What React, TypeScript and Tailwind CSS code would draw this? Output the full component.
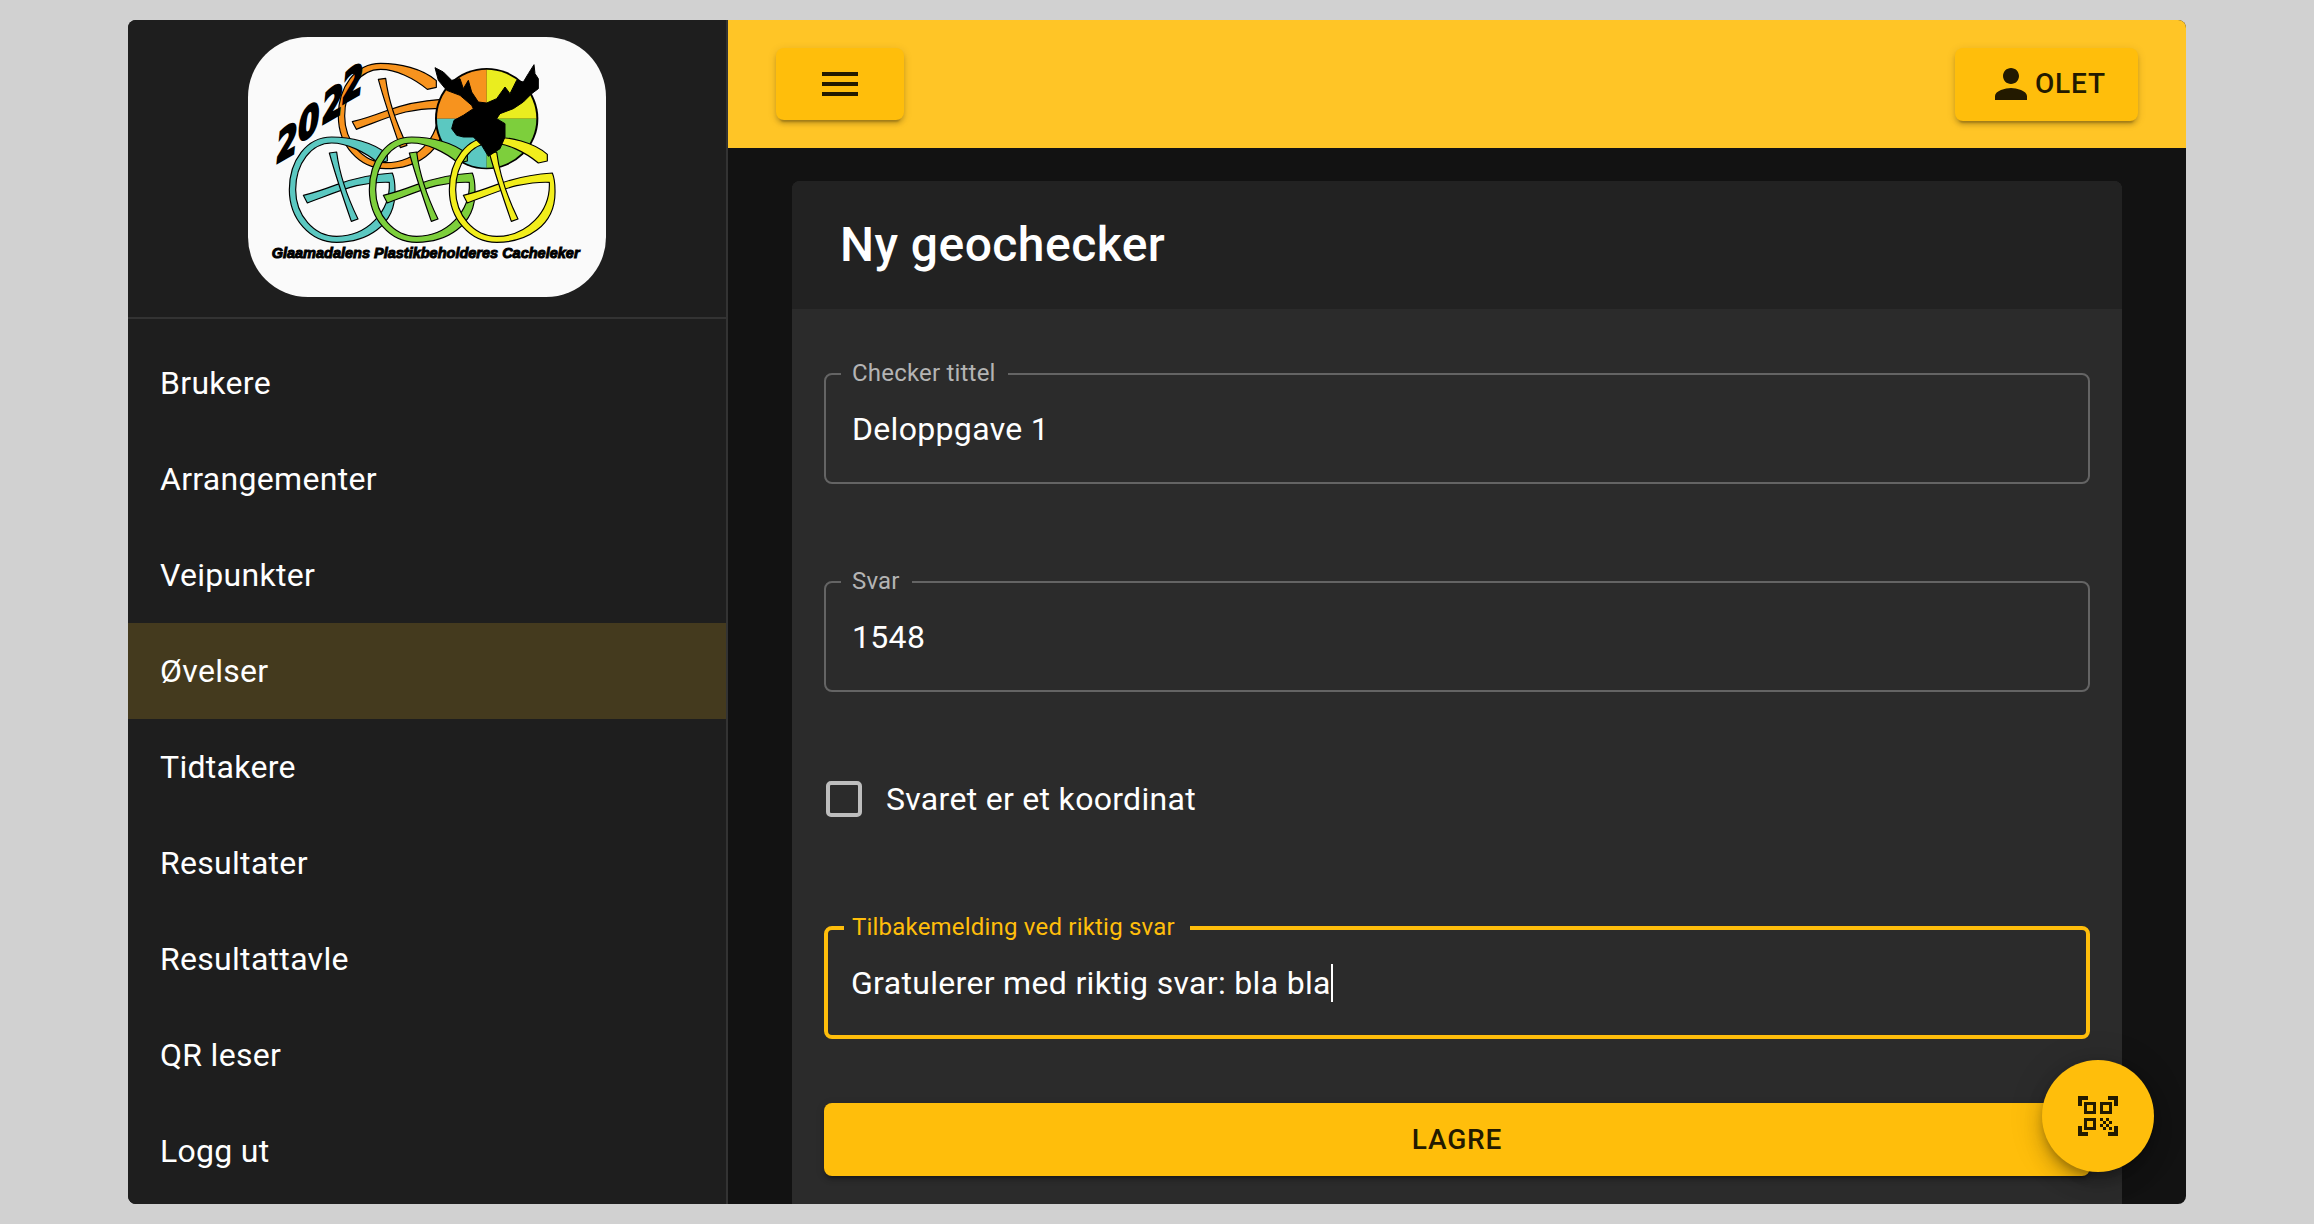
import React from "react";

const menuItems = [
  "Brukere",
  "Arrangementer",
  "Veipunkter",
  "Øvelser",
  "Tidtakere",
  "Resultater",
  "Resultattavle",
  "QR leser",
  "Logg ut",
];

// digits of the year in the logo climb step by step
const yearDigits = [
  { digit: "2", x: 135, y: 402 },
  { digit: "0", x: 200, y: 340 },
  { digit: "2", x: 272, y: 285 },
  { digit: "2", x: 332, y: 224 },
];

const RING_PATH =
  "M472 372C430 335 360 320 305 320C230 320 178 390 178 478C178 565 240 636 320 636C405 636 498 590 495 480C495 460 492 440 487 428C420 432 360 448 320 463C280 478 250 488 220 495L232 518C270 505 330 478 380 466C420 458 460 455 478 456C482 545 410 618 320 618C252 618 197 555 197 478C197 398 245 338 305 338C350 338 405 365 445 398L472 392Z";
const CROSS_PATH = "M298 368L320 365C328 430 352 500 384 566L364 573C342 510 318 440 298 368Z";

function Geocache({ color, dx, dy }: { color: string; dx: number; dy: number }) {
  return (
    <g transform={`translate(${dx} ${dy})`} fill={color} stroke="#000" strokeWidth="3.5" strokeLinejoin="round">
      <path d={RING_PATH} />
      <path d={CROSS_PATH} />
    </g>
  );
}

function Logo() {
  return (
    <svg viewBox="55 20 1072 780" className="w-[358px] h-[260px] rounded-[60px] bg-[#fafafa]">
      <Geocache color="#f7931e" dx={147} dy={-221} />
      <ellipse cx="770" cy="265" rx="155" ry="152" fill="#000" />
      <path d="M770 118A149 147 0 0 0 621 265H770Z" fill="#f7931e" />
      <path d="M770 118A149 147 0 0 1 919 265H770Z" fill="#eaed1f" />
      <path d="M770 412A149 147 0 0 1 621 265H770Z" fill="#5bc8c1" />
      <path d="M770 412A149 147 0 0 0 919 265H770Z" fill="#7dcf3c" />
      <Geocache color="#5bc8c1" dx={0} dy={0} />
      <Geocache color="#7dcf3c" dx={240} dy={0} />
      <Geocache color="#f2ee1c" dx={480} dy={0} />
      <path
        d="M615 112L640 125L665 150L690 145L700 175L715 150L725 185L745 215L770 218L800 205L825 170L840 190L860 150L880 155L895 130L912 103L915 130L925 145L925 175L905 190L880 215L850 235L810 250L800 265L825 280L825 320L810 355L775 378L755 345L730 320L700 320L680 315L665 295L672 270L700 255L730 235L725 225L690 195L650 180L625 150Z"
        fill="#000"
        stroke="#000"
        strokeWidth="3"
        strokeLinejoin="round"
      />
      {yearDigits.map((d, i) => (
        <text
          key={i}
          transform={`translate(${d.x} ${d.y}) skewY(-30) skewX(-6) scale(0.72 1)`}
          fontFamily="'DejaVu Sans', sans-serif"
          fontWeight="700"
          fontSize="125"
          fill="#000"
          stroke="#000"
          strokeWidth="8"
        >
          {d.digit}
        </text>
      ))}
      <text
        x="125"
        y="684"
        fontFamily="'Liberation Sans', sans-serif"
        fontWeight="700"
        fontStyle="italic"
        fontSize="43.5"
        fill="#000"
        stroke="#000"
        strokeWidth="3"
      >
        Glaamadalens Plastikbeholderes Cacheleker
      </text>
    </svg>
  );
}

function Field({
  label,
  value,
  focused,
  className,
}: {
  label: string;
  value: string;
  focused?: boolean;
  className?: string;
}) {
  return (
    <div
      className={`relative rounded-lg flex items-center text-[32px] tracking-[0.32px] text-white ${
        focused ? "h-[113px] border-[4px] border-[#ffbe0b] pl-[23px]" : "h-[111px] border-2 border-[#646464] pl-[26px]"
      } ${className ?? ""}`}
    >
      <span
        className={`absolute bg-[#2b2b2b] text-[24px] leading-[24px] tracking-[0.2px] whitespace-nowrap ${
          focused
            ? "left-[16px] -top-[15px] pl-[8px] pr-[15px] text-[#ffbe0b]"
            : "left-[15px] -top-[14px] pl-[11px] pr-[12px] text-[#b4b4b4]"
        }`}
      >
        {label}
      </span>
      <span className="flex items-center">
        {value}
        {focused && <span className="w-[2px] h-[38px] bg-white" />}
      </span>
    </div>
  );
}

export default function App() {
  return (
    <div className="h-[1224px] bg-[#d1d1d1] px-[128px] py-[20px] font-['Roboto',sans-serif]">
      <div className="relative flex h-[1184px] w-[2058px] overflow-hidden rounded-lg bg-[#121212]">
        <aside className="w-[600px] shrink-0 bg-[#1e1e1e] border-r-2 border-[#333333] text-white">
          <div className="flex h-[299px] justify-center pt-[17px] border-b-2 border-[#333333]">
            <Logo />
          </div>
          <nav className="pt-[16px]">
            {menuItems.map((item) => (
              <div
                key={item}
                className={`flex h-[96px] items-center px-[32px] text-[32px] tracking-[0.3px] ${
                  item === "Øvelser" ? "bg-[#443a1e]" : ""
                }`}
              >
                {item}
              </div>
            ))}
          </nav>
        </aside>
        <main className="flex-1 min-w-0">
          <header className="flex h-[128px] items-center justify-between bg-[#ffc526] px-[48px] text-[#231a00]">
            <button className="flex h-[72px] w-[128px] items-center justify-center rounded-lg bg-[#ffbe0b] shadow-[0_6px_2px_-4px_rgba(0,0,0,0.2),0_4px_4px_0_rgba(0,0,0,0.14),0_2px_10px_0_rgba(0,0,0,0.12)]">
              <svg viewBox="0 0 24 24" className="w-12 h-12" fill="currentColor">
                <path d="M3 18h18v-2H3v2zm0-5h18v-2H3v2zm0-7v2h18V6H3z" />
              </svg>
            </button>
            <button className="flex h-[73px] w-[183px] items-center pl-[32px] rounded-lg bg-[#ffbe0b] text-[28px] font-medium tracking-[0.8px] shadow-[0_6px_2px_-4px_rgba(0,0,0,0.2),0_4px_4px_0_rgba(0,0,0,0.14),0_2px_10px_0_rgba(0,0,0,0.12)]">
              <svg viewBox="0 0 24 24" className="w-12 h-12" fill="currentColor">
                <path d="M12 12c2.21 0 4-1.79 4-4s-1.79-4-4-4-4 1.79-4 4 1.79 4 4 4zm0 2c-2.67 0-8 1.34-8 4v2h16v-2c0-2.66-5.33-4-8-4z" />
              </svg>
              OLET
            </button>
          </header>
          <div className="px-[64px] pt-[33px]">
            <section className="rounded-lg overflow-hidden bg-[#2b2b2b] h-[1100px]">
              <div className="flex h-[128px] items-center bg-[#222222] px-[48px] text-[48px] font-medium tracking-[0.45px] text-white">
                Ny geochecker
              </div>
              <div className="px-[32px] pt-[64px]">
                <Field label="Checker tittel" value="Deloppgave 1" />
                <Field label="Svar" value="1548" className="mt-[97px]" />
                <div className="mt-[89px] flex items-center h-[36px] text-[32px] tracking-[0.3px] text-white">
                  <span className="ml-[2px] w-[36px] h-[36px] rounded-[5px] border-[4px] border-[#bdbdbd]" />
                  <span className="ml-[24px]">Svaret er et koordinat</span>
                </div>
                <Field
                  label="Tilbakemelding ved riktig svar"
                  value="Gratulerer med riktig svar: bla bla"
                  focused
                  className="mt-[109px]"
                />
                <button className="mt-[64px] flex h-[73px] w-full items-center justify-center rounded-lg bg-[#ffbe0b] text-[28px] font-medium tracking-[0.8px] text-[#231a00] shadow-[0_6px_2px_-4px_rgba(0,0,0,0.2),0_4px_4px_0_rgba(0,0,0,0.14),0_2px_10px_0_rgba(0,0,0,0.12)]">
                  LAGRE
                </button>
              </div>
            </section>
          </div>
        </main>
        <button className="absolute right-[32px] bottom-[32px] flex h-[112px] w-[112px] items-center justify-center rounded-full bg-[#ffbe0b] text-[#231a00] shadow-[0_6px_10px_-2px_rgba(0,0,0,0.25),0_12px_20px_0_rgba(0,0,0,0.16),0_2px_36px_0_rgba(0,0,0,0.14)]">
          <svg viewBox="0 0 24 24" className="w-12 h-12" fill="currentColor">
            <path d="M9.5 6.5v3h-3v-3h3M11 5H5v6h6V5zm-1.5 9.5v3h-3v-3h3M11 13H5v6h6v-6zm6.5-6.5v3h-3v-3h3M19 5h-6v6h6V5zm-6 8h1.5v1.5H13V13zm1.5 1.5H16V16h-1.5v-1.5zM16 13h1.5v1.5H16V13zm-3 3h1.5v1.5H13V16zm1.5 1.5H16V19h-1.5v-1.5zM16 16h1.5v1.5H16V16zm1.5-1.5H19V16h-1.5v-1.5zm0 3H19V19h-1.5v-1.5zM22 7h-2V4h-3V2h5v5zm0 15v-5h-2v3h-3v2h5zM2 22h5v-2H4v-3H2v5zM2 2v5h2V4h3V2H2z" />
          </svg>
        </button>
      </div>
    </div>
  );
}
